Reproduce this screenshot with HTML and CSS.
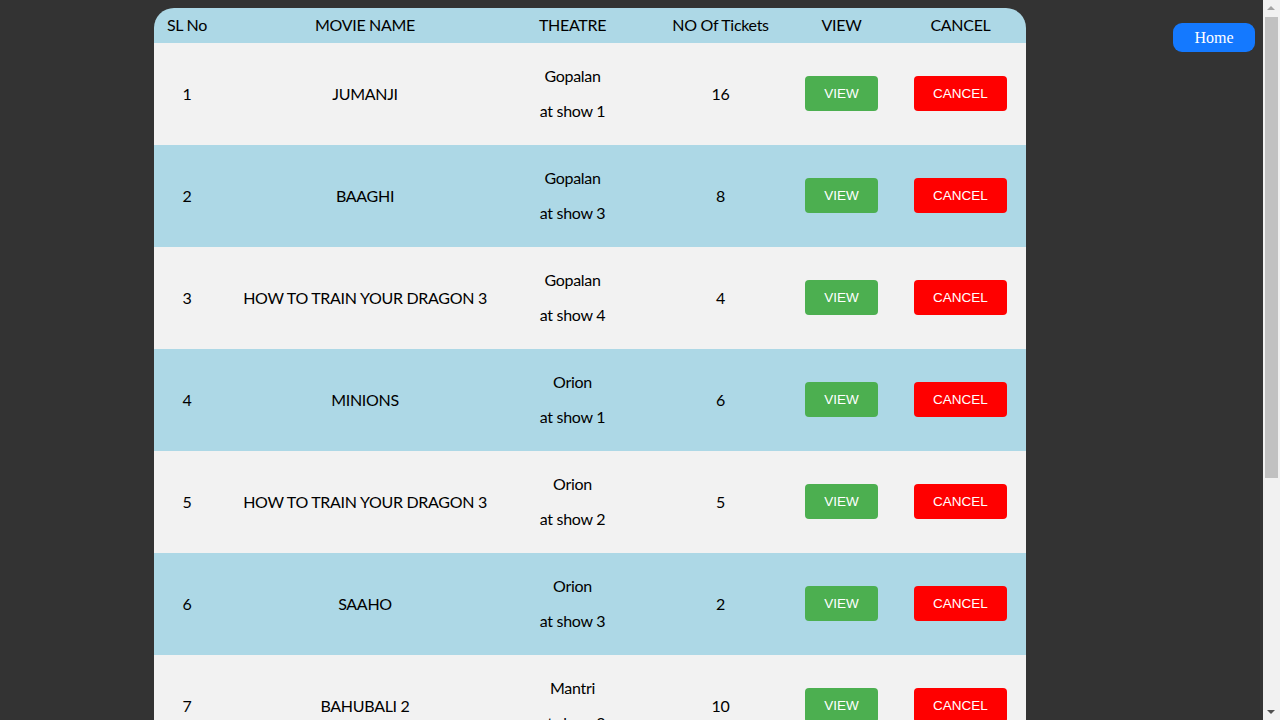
FILE: index.html
```html
<!DOCTYPE html>
<html>
<head>
<meta charset="utf-8">
<title>My Bookings</title>
<link rel="stylesheet" href="styles.css">
</head>
<body>
<div class="page">
  <div class="bookings">
    <div class="row head">
      <div class="cell">SL No</div>
      <div class="cell">MOVIE NAME</div>
      <div class="cell">THEATRE</div>
      <div class="cell">NO Of Tickets</div>
      <div class="cell">VIEW</div>
      <div class="cell last">CANCEL</div>
    </div>
    <div class="row odd">
      <div class="cell">1</div>
      <div class="cell">JUMANJI</div>
      <div class="cell"><p>Gopalan</p><p>at show 1</p></div>
      <div class="cell">16</div>
      <div class="cell"><button class="btn view">VIEW</button></div>
      <div class="cell last"><button class="btn cancel">CANCEL</button></div>
    </div>
    <div class="row even">
      <div class="cell">2</div>
      <div class="cell">BAAGHI</div>
      <div class="cell"><p>Gopalan</p><p>at show 3</p></div>
      <div class="cell">8</div>
      <div class="cell"><button class="btn view">VIEW</button></div>
      <div class="cell last"><button class="btn cancel">CANCEL</button></div>
    </div>
    <div class="row odd">
      <div class="cell">3</div>
      <div class="cell">HOW TO TRAIN YOUR DRAGON 3</div>
      <div class="cell"><p>Gopalan</p><p>at show 4</p></div>
      <div class="cell">4</div>
      <div class="cell"><button class="btn view">VIEW</button></div>
      <div class="cell last"><button class="btn cancel">CANCEL</button></div>
    </div>
    <div class="row even">
      <div class="cell">4</div>
      <div class="cell">MINIONS</div>
      <div class="cell"><p>Orion</p><p>at show 1</p></div>
      <div class="cell">6</div>
      <div class="cell"><button class="btn view">VIEW</button></div>
      <div class="cell last"><button class="btn cancel">CANCEL</button></div>
    </div>
    <div class="row odd">
      <div class="cell">5</div>
      <div class="cell">HOW TO TRAIN YOUR DRAGON 3</div>
      <div class="cell"><p>Orion</p><p>at show 2</p></div>
      <div class="cell">5</div>
      <div class="cell"><button class="btn view">VIEW</button></div>
      <div class="cell last"><button class="btn cancel">CANCEL</button></div>
    </div>
    <div class="row even">
      <div class="cell">6</div>
      <div class="cell">SAAHO</div>
      <div class="cell"><p>Orion</p><p>at show 3</p></div>
      <div class="cell">2</div>
      <div class="cell"><button class="btn view">VIEW</button></div>
      <div class="cell last"><button class="btn cancel">CANCEL</button></div>
    </div>
    <div class="row odd">
      <div class="cell">7</div>
      <div class="cell">BAHUBALI 2</div>
      <div class="cell"><p>Mantri</p><p>at show 2</p></div>
      <div class="cell">10</div>
      <div class="cell"><button class="btn view">VIEW</button></div>
      <div class="cell last"><button class="btn cancel">CANCEL</button></div>
    </div>
  </div>
  <button class="home">Home</button>
</div>
<div class="scrollbar">
  <span class="arrow up"></span>
  <span class="thumb"></span>
  <span class="arrow down"></span>
</div>
</body>
</html>
```

FILE: styles.css
```css
html, body {
  background: #333333;
}
body {
  margin: 8px;
  font-family: "Lato", "DejaVu Sans", sans-serif;
  font-size: 16px;
  letter-spacing: -0.3px;
  color: #000;
}
.page {
  display: flex;
  align-items: flex-start;
  padding-right: 17px;
}
.bookings {
  width: 872px;
  margin-left: 146px;
  border-radius: 20px 20px 0 0;
  overflow: hidden;
}
.row {
  display: grid;
  grid-template-columns: 66px 290px 125px 171px 71px 149px;
}
.head, .even {
  background: #add8e6;
}
.odd {
  background: #f2f2f2;
}
.cell {
  padding: 7px 8px 9px;
  line-height: 19px;
  display: flex;
  flex-direction: column;
  align-items: center;
  justify-content: center;
  text-align: center;
  white-space: nowrap;
}
.cell.last {
  padding-left: 26px;
}
.cell p {
  margin: 16px 0;
}
.cell p + p {
  margin-top: 0;
}
.btn {
  font-family: "Liberation Sans", Arial, sans-serif;
  font-size: 13.5px;
  letter-spacing: 0;
  color: #fff;
  border: none;
  border-radius: 4px;
  height: 35px;
  padding: 0 19px;
  cursor: pointer;
}
.view {
  background: #4caf50;
}
.cancel {
  background: #ff0000;
}
.home {
  margin-left: auto;
  margin-top: 15px;
  background: #1479ff;
  color: #fff;
  border: none;
  border-radius: 9px;
  font-family: "Liberation Serif", "Times New Roman", serif;
  font-size: 16px;
  letter-spacing: 0;
  width: 82px;
  height: 29px;
  padding: 0;
}
.scrollbar {
  position: fixed;
  top: 0;
  right: 0;
  width: 17px;
  height: 720px;
  background: #f1f1f1;
}
.thumb {
  position: absolute;
  left: 2px;
  top: 17px;
  width: 13px;
  height: 461px;
  background: #c1c1c1;
}
.arrow {
  position: absolute;
  left: 4px;
  width: 0;
  height: 0;
  border-left: 4.5px solid transparent;
  border-right: 4.5px solid transparent;
}
.arrow.up {
  top: 6px;
  border-bottom: 4.5px solid #a3a3a3;
}
.arrow.down {
  bottom: 6px;
  border-top: 4.5px solid #505050;
}
```
